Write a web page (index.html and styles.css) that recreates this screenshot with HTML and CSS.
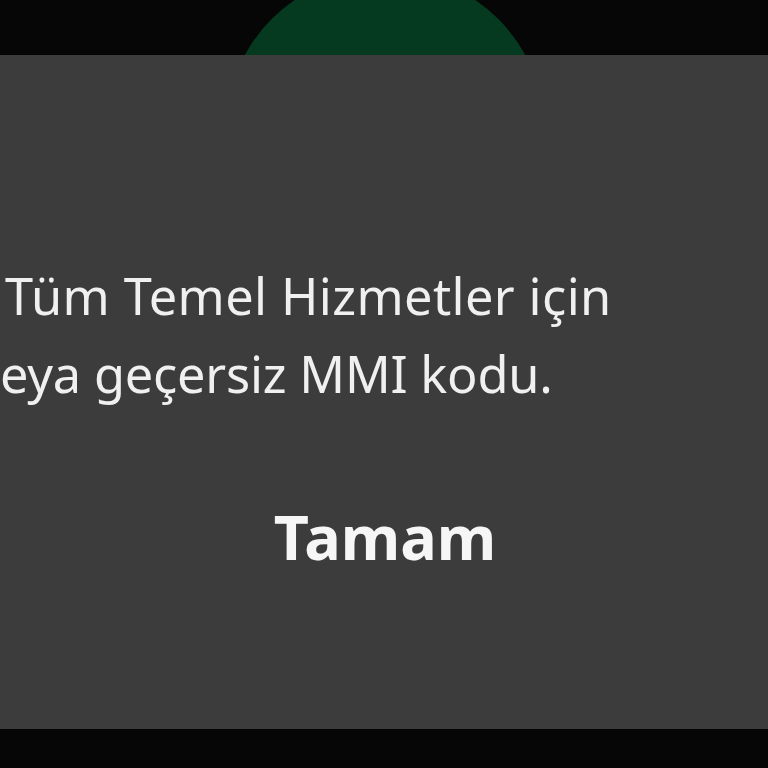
FILE: index.html
```html
<!DOCTYPE html>
<html lang="tr">
<head>
<meta charset="utf-8">
<link rel="stylesheet" href="styles.css">
</head>
<body>
<div class="screen">
  <div class="top">
    <div class="avatar"></div>
  </div>
  <div class="dialog">
    <div class="message">
      <p class="line line1">Tüm Temel Hizmetler için</p>
      <p class="line line2">eya geçersiz MMI kodu.</p>
    </div>
    <div class="actions">
      <span class="ok">Tamam</span>
    </div>
  </div>
</div>
</body>
</html>
```
FILE: styles.css
```css
html, body {
  margin: 0;
  padding: 0;
  background: #060606;
}
.screen {
  width: 768px;
  height: 768px;
  overflow: hidden;
  position: relative;
  font-family: "Noto Sans", "DejaVu Sans", sans-serif;
  color: #f0f0f0;
}
.top {
  height: 55px;
  position: relative;
}
.avatar {
  position: absolute;
  left: 225px;
  top: -28px;
  width: 320px;
  height: 320px;
  border-radius: 50%;
  background: #053a20;
}
.dialog {
  position: relative;
  height: 674px;
  background: #3c3c3c;
  display: flex;
  flex-direction: column;
}
.message {
  padding-top: 202px;
}
.line {
  margin: 0;
  font-size: 50.5px;
  line-height: 78px;
  white-space: nowrap;
}
.line1 {
  padding-left: 5px;
  letter-spacing: 0.4px;
}
.line2 {
  padding-left: 0;
  letter-spacing: -0.2px;
}
.actions {
  display: flex;
  justify-content: center;
  padding-top: 84px;
  padding-left: 2px;
}
.ok {
  font-weight: 700;
  font-size: 61px;
  line-height: 80px;
  color: #f6f6f6;
}
```
